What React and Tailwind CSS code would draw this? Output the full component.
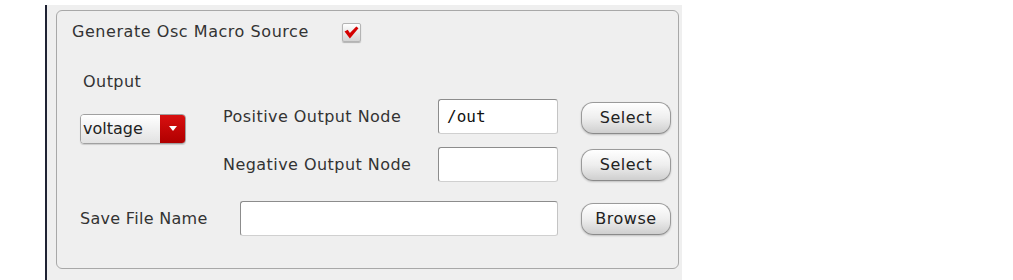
import React from 'react';

const font = { fontFamily: '"DejaVu Sans", Verdana, sans-serif' };

const Button = ({ label }) => (
  <button className="w-[90px] h-[32px] rounded-[12px] border border-[#9a9a9a] border-b-[#8a8a8a] bg-gradient-to-b from-[#ffffff] via-[#eeeeee] to-[#cfcfcf] text-[16px] tracking-[0.5px] text-[#222] shadow-[0_1px_2px_rgba(0,0,0,0.2)]">
    {label}
  </button>
);

const TextInput = ({ value, className = '' }) => (
  <div
    className={`h-[35px] bg-white border border-[#8c8c8c] border-b-[#d0d0d0] border-r-[#c4c4c4] rounded-[3px] flex items-center px-[8px] text-[16px] text-[#111] font-['DejaVu_Sans_Mono',monospace] ${className}`}
  >
    {value}
  </div>
);

export default function App() {
  return (
    <div className="w-[1013px] h-[280px] bg-white flex text-[#333] tracking-[0.45px]" style={font}>
      <div className="w-[45px]" />
      {/* dark separator + gray dialog area */}
      <div className="w-[2px] mt-[5px] bg-[#1e2233]" />
      <div className="w-[635px] mt-[5px] bg-[#efefef] pl-[9px] pr-[3px] pt-[5px]">
        <div className="h-[259px] border border-[#a8a8a8] rounded-[6px] flex flex-col">
          {/* row 1 */}
          <div className="mt-[11px] h-[20px] flex items-center">
            <span className="ml-[15px] w-[270px] text-[16px] tracking-[0.55px]">Generate Osc Macro Source</span>
            <div className="w-[19px] h-[19px] border border-[#b4b4b4] rounded-[2px] bg-gradient-to-b from-white to-[#d4d4d4] shadow-[0_1px_1px_rgba(0,0,0,0.25)] flex items-center justify-center">
              <svg width="15" height="13" viewBox="0 0 14 12">
                <path d="M0.5 5 L3.5 3.5 L5.5 6.5 L11.5 0.5 L13.5 2 L5.5 11.5 Z" fill="#d40000" />
              </svg>
            </div>
          </div>
          {/* row 2 */}
          <div className="mt-[30px] h-[20px] flex items-center">
            <span className="ml-[26px] text-[16px]">Output</span>
          </div>
          {/* rows 3/4 */}
          <div className="mt-[7px] flex">
            <div className="ml-[23px] mt-[15px] w-[106px] h-[30px] flex rounded-[4px] border border-[#a0a0a0] overflow-hidden shadow-[0_1px_1px_rgba(0,0,0,0.15)]">
              <div className="flex-1 bg-gradient-to-b from-white to-[#e2e2e2] flex items-center pl-[2px] text-[16px] tracking-normal text-[#222]">
                voltage
              </div>
              <div className="w-[25px] bg-gradient-to-b from-[#d81010] to-[#b00000] flex items-center justify-center">
                <svg width="10" height="6" viewBox="0 0 10 6">
                  <path d="M1 0 L9 0 L5 5 Z" fill="#fff" />
                </svg>
              </div>
            </div>
            <div className="ml-[37px] flex flex-col gap-[13px]">
              <div className="h-[35px] flex items-center">
                <span className="w-[215px] text-[16px]">Positive Output Node</span>
                <TextInput value="/out" className="w-[120px] tracking-normal" />
                <div className="ml-[23px] mt-[3px]">
                  <Button label="Select" />
                </div>
              </div>
              <div className="h-[35px] flex items-center">
                <span className="w-[215px] text-[16px]">Negative Output Node</span>
                <TextInput value="" className="w-[120px]" />
                <div className="ml-[23px]">
                  <Button label="Select" />
                </div>
              </div>
            </div>
          </div>
          {/* row 5 */}
          <div className="mt-[19px] h-[35px] flex items-center">
            <span className="ml-[23px] w-[160px] text-[16px] tracking-[0.3px]">Save File Name</span>
            <TextInput value="" className="w-[318px]" />
            <div className="ml-[23px]">
              <Button label="Browse" />
            </div>
          </div>
        </div>
      </div>
    </div>
  );
}
